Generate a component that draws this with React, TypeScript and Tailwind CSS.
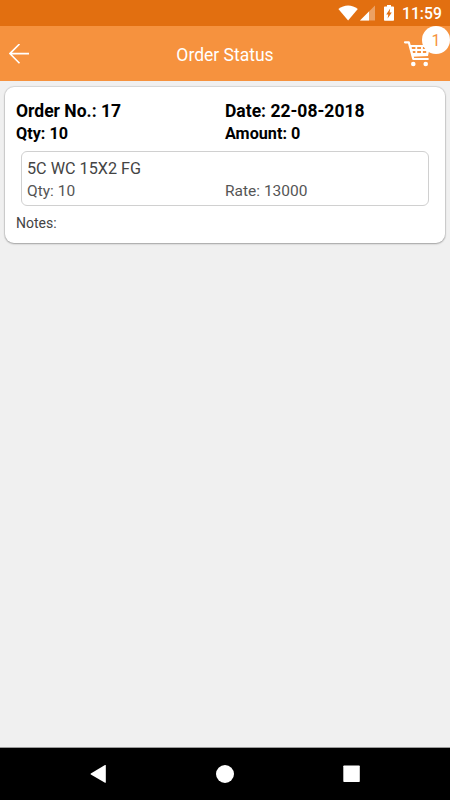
import React from "react";

const order = {
  no: 17,
  date: "22-08-2018",
  qty: 10,
  amount: 0,
  items: [{ name: "5C WC 15X2 FG", qty: 10, rate: 13000 }],
};

const StatusBar = () => (
  <div className="flex h-[26px] items-center justify-end bg-[#e26f10] pr-[9px] text-white">
    <svg className="mr-[2px] h-[26px] w-5" viewBox="338 0 20 26" fill="currentColor">
      <path d="M338.4 9C344 4.2 352.2 4.2 357.8 9L348.1 20.6Z" />
    </svg>
    <svg className="mr-[8px] h-[26px] w-4" viewBox="360 0 16 26" fill="currentColor">
      <path d="M375 5.6V20.6H360Z" opacity="0.35" />
      <path d="M369 11.6V20.6H360Z" />
    </svg>
    <svg className="mr-[8px] h-[26px] w-[10px]" viewBox="384 0 10 26" fill="currentColor">
      <path
        fillRule="evenodd"
        d="M387 5H391V6.4H393.2Q394 6.4 394 7.2V20Q394 20.8 393.2 20.8H384.8Q384 20.8 384 20V7.2Q384 6.4 384.8 6.4H387ZM390.2 8.4L386.2 14.6H388.3L387.6 18.4L391.8 12.4H389.6Z"
      />
    </svg>
    <span className="w-[39px] pt-[2px] text-[15.7px] leading-[26px] font-medium whitespace-nowrap">11:59</span>
  </div>
);

const TopBar = () => (
  <header className="flex h-[55px] items-center bg-[#f6923e] text-white">
    <button className="w-[60px] pl-[9px]" aria-label="Back">
      <svg className="h-5 w-5" viewBox="0 0 20 20" fill="none" stroke="currentColor" strokeWidth="1.6">
        <path d="M10.5 0L0.9 9.6L10.5 19.2M1 9.6H20" />
      </svg>
    </button>
    <h1 className="flex-1 pt-[2px] text-center text-[17.5px] leading-6">Order Status</h1>
    <button className="relative h-[55px] w-[60px]" aria-label="Cart">
      <svg className="h-[55px] w-[60px]" viewBox="390 26 60 55" fill="none" stroke="currentColor">
        <path
          d="M405 42.3H408.8L413.3 59H427.8"
          strokeWidth="2.2"
          strokeLinecap="round"
          strokeLinejoin="round"
        />
        {/* basket with two rows of openings */}
        <path
          fill="currentColor"
          stroke="none"
          fillRule="evenodd"
          d="M409.2 45H430.2L428 56L412.2 56.8ZM411.6 47V49H415.4V47ZM417.2 47V49H421V47ZM422.9 47V49H427V47ZM412.6 51V53H415.4V51ZM417.2 51V53H421V51ZM422.9 51V53H426.2V51Z"
        />
        <circle cx="413.3" cy="64" r="2.3" fill="currentColor" stroke="none" />
        <circle cx="425.7" cy="64" r="2.3" fill="currentColor" stroke="none" />
      </svg>
      <span className="absolute top-0 right-0 h-7 w-7 rounded-full bg-white text-center text-[16px] leading-[29px] text-[#f6923e]">
        1
      </span>
    </button>
  </header>
);

const OrderCard = () => (
  <section className="mx-[5px] mt-[6px] h-[156px] rounded-[9px] bg-white px-[11px] pt-[13px] shadow-[0_0_1px_1px_rgba(0,0,0,0.1),0_1px_2px_rgba(0,0,0,0.25)]">
    <div className="grid grid-cols-[209px_1fr] text-[17.5px] leading-[22px] font-bold text-black">
      <span>Order No.: {order.no}</span>
      <span>Date: {order.date}</span>
    </div>
    <div className="grid grid-cols-[209px_1fr] pt-px text-[16.2px] leading-[22px] font-bold text-black">
      <span>Qty: {order.qty}</span>
      <span>Amount: {order.amount}</span>
    </div>
    {order.items.map((item) => (
      <div
        key={item.name}
        className="mx-[5px] mt-[6px] h-[55px] rounded-md border border-[#d0d0d0] px-[5px] pt-[6px]"
      >
        <p className="text-[16.2px] leading-[22px] text-[#444]">{item.name}</p>
        <div className="grid grid-cols-[198px_1fr] text-[15.5px] leading-[22px] text-[#555]">
          <span>Qty: {item.qty}</span>
          <span>Rate: {item.rate}</span>
        </div>
      </div>
    ))}
    <p className="mt-[7px] text-[14px] leading-[20px] text-[#444]">Notes:</p>
  </section>
);

const NavBar = () => (
  <nav className="h-[53px] border-t border-[#9a9a9a] bg-black">
    <svg className="h-[52px] w-full" viewBox="0 748 450 52" fill="#fff">
      <path d="M105.8 765.2V782.6Q105.6 783 105 782.7L90.8 774.6Q90.2 774 90.8 773.4L105 765.1Q105.6 764.8 105.8 765.2Z" />
      <circle cx="225" cy="774" r="9" />
      <rect x="343.3" y="765.5" width="16.5" height="16.5" rx="0.8" />
    </svg>
  </nav>
);

export default function App() {
  return (
    <div className="flex h-[800px] w-[450px] flex-col overflow-hidden bg-[#f0f0f0] font-['Roboto',sans-serif]">
      <StatusBar />
      <TopBar />
      <main className="flex-1">
        <OrderCard />
      </main>
      <NavBar />
    </div>
  );
}
